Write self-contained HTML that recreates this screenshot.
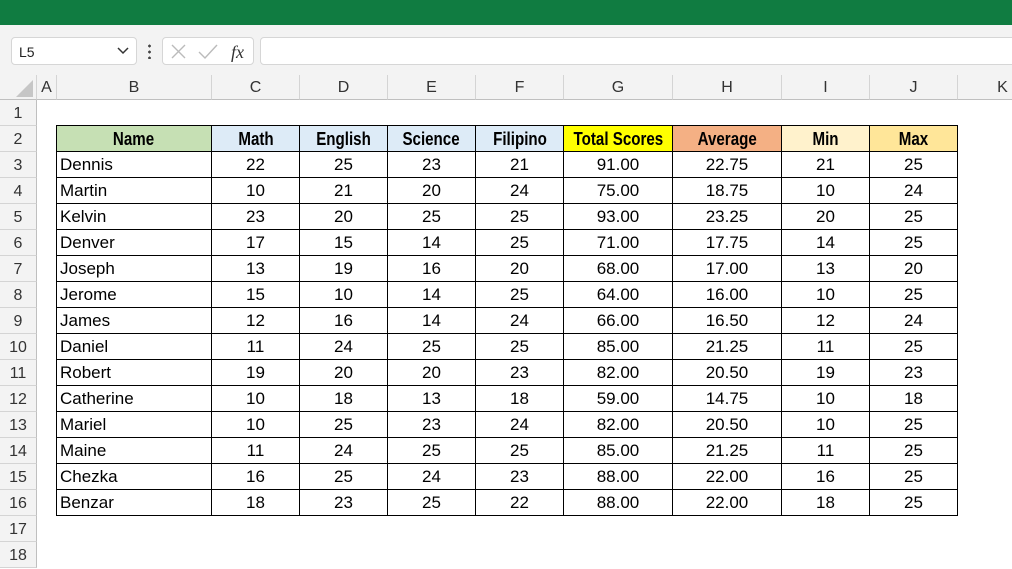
<!DOCTYPE html>
<html><head><meta charset="utf-8"><style>
*{margin:0;padding:0;box-sizing:border-box}
body{width:1012px;height:555px;overflow:hidden;background:#fff;font-family:"Liberation Sans",Arial,sans-serif;position:relative}
.top{position:absolute;left:0;top:0;width:1012px;height:25px;background:#107c41}
.fb{position:absolute;left:0;top:25px;width:1012px;height:50px;background:#f3f3f3}
.nb{position:absolute;left:11px;top:37px;width:126px;height:28px;background:#fff;border:1px solid #d6d6d6;border-radius:4px;font-size:14px;padding:6px 0 0 7px;color:#222}
.fx{position:absolute;left:162px;top:37px;width:92px;height:28px;background:#fff;border:1px solid #d6d6d6;border-radius:4px}
.fin{position:absolute;left:260px;top:37px;width:760px;height:28px;background:#fff;border:1px solid #d6d6d6;border-radius:4px}
.ch{position:absolute;top:75px;height:25px;background:#f3f3f3;border-bottom:1px solid #bfbfbf;border-right:1px solid #d4d4d4;text-align:center;font-size:16px;line-height:26px;color:#333}
.rh{position:absolute;left:0;width:37px;height:26px;background:#f3f3f3;border-bottom:1px solid #d4d4d4;border-right:1px solid #bfbfbf;text-align:center;font-size:16px;line-height:27px;color:#333}
table{position:absolute;left:56px;top:125px;border-collapse:collapse}
td{border:1px solid #000;height:26px;padding:0;font-size:17px;text-align:center;color:#000;line-height:24px;white-space:nowrap}
td.n{text-align:left;padding-left:3px}
tr.h td{font-weight:bold;font-size:18px}
tr.h td span{display:inline-block;transform:scaleX(0.84)}
</style></head><body>
<div class="top"></div>
<div class="fb"></div>
<div class="nb">L5<svg style="position:absolute;left:105px;top:9px" width="12" height="8"><path d="M1 1L6 6L11 1" stroke="#333" stroke-width="1.5" fill="none"/></svg></div>
<div style="position:absolute;left:148px;top:43px;width:3px;height:16px;background:radial-gradient(circle,#444 1.3px,transparent 1.5px) 0 0/3px 6px"></div>
<div class="fx"><svg width="92" height="28"><path d="M9 7L22 20M22 7L9 20" stroke="#bbb" stroke-width="1.4"/><path d="M36 14L42 20L54 7" stroke="#bbb" stroke-width="1.4" fill="none"/><text x="68" y="20" font-family="Liberation Serif" font-style="italic" font-size="18" fill="#333">fx</text></svg></div>
<div class="fin"></div>
<div class="ch" style="left:0;width:37px;"><svg width="37" height="25" style="position:absolute;left:0;top:0"><path d="M33 5L33 22L16 22Z" fill="#c6c6c6"/></svg></div>
<div class="ch" style="left:37px;width:20px">A</div>
<div class="ch" style="left:57px;width:155px">B</div>
<div class="ch" style="left:212px;width:88px">C</div>
<div class="ch" style="left:300px;width:88px">D</div>
<div class="ch" style="left:388px;width:88px">E</div>
<div class="ch" style="left:476px;width:88px">F</div>
<div class="ch" style="left:564px;width:109px">G</div>
<div class="ch" style="left:673px;width:109px">H</div>
<div class="ch" style="left:782px;width:88px">I</div>
<div class="ch" style="left:870px;width:88px">J</div>
<div class="ch" style="left:958px;width:90px">K</div>
<div class="rh" style="top:100px">1</div><div class="rh" style="top:126px">2</div><div class="rh" style="top:152px">3</div><div class="rh" style="top:178px">4</div><div class="rh" style="top:204px">5</div><div class="rh" style="top:230px">6</div><div class="rh" style="top:256px">7</div><div class="rh" style="top:282px">8</div><div class="rh" style="top:308px">9</div><div class="rh" style="top:334px">10</div><div class="rh" style="top:360px">11</div><div class="rh" style="top:386px">12</div><div class="rh" style="top:412px">13</div><div class="rh" style="top:438px">14</div><div class="rh" style="top:464px">15</div><div class="rh" style="top:490px">16</div><div class="rh" style="top:516px">17</div><div class="rh" style="top:542px">18</div>
<table>
<colgroup><col style="width:155px"><col style="width:88px"><col style="width:88px"><col style="width:88px"><col style="width:88px"><col style="width:109px"><col style="width:109px"><col style="width:88px"><col style="width:88px"></colgroup>
<tr class="h"><td style="background:#c6e0b4"><span>Name</span></td><td style="background:#ddebf7"><span>Math</span></td><td style="background:#ddebf7"><span>English</span></td><td style="background:#ddebf7"><span>Science</span></td><td style="background:#ddebf7"><span>Filipino</span></td><td style="background:#ffff00"><span>Total Scores</span></td><td style="background:#f4b084"><span>Average</span></td><td style="background:#fff2cc"><span>Min</span></td><td style="background:#ffe699"><span>Max</span></td></tr>
<tr><td class="n">Dennis</td><td>22</td><td>25</td><td>23</td><td>21</td><td>91.00</td><td>22.75</td><td>21</td><td>25</td></tr>
<tr><td class="n">Martin</td><td>10</td><td>21</td><td>20</td><td>24</td><td>75.00</td><td>18.75</td><td>10</td><td>24</td></tr>
<tr><td class="n">Kelvin</td><td>23</td><td>20</td><td>25</td><td>25</td><td>93.00</td><td>23.25</td><td>20</td><td>25</td></tr>
<tr><td class="n">Denver</td><td>17</td><td>15</td><td>14</td><td>25</td><td>71.00</td><td>17.75</td><td>14</td><td>25</td></tr>
<tr><td class="n">Joseph</td><td>13</td><td>19</td><td>16</td><td>20</td><td>68.00</td><td>17.00</td><td>13</td><td>20</td></tr>
<tr><td class="n">Jerome</td><td>15</td><td>10</td><td>14</td><td>25</td><td>64.00</td><td>16.00</td><td>10</td><td>25</td></tr>
<tr><td class="n">James</td><td>12</td><td>16</td><td>14</td><td>24</td><td>66.00</td><td>16.50</td><td>12</td><td>24</td></tr>
<tr><td class="n">Daniel</td><td>11</td><td>24</td><td>25</td><td>25</td><td>85.00</td><td>21.25</td><td>11</td><td>25</td></tr>
<tr><td class="n">Robert</td><td>19</td><td>20</td><td>20</td><td>23</td><td>82.00</td><td>20.50</td><td>19</td><td>23</td></tr>
<tr><td class="n">Catherine</td><td>10</td><td>18</td><td>13</td><td>18</td><td>59.00</td><td>14.75</td><td>10</td><td>18</td></tr>
<tr><td class="n">Mariel</td><td>10</td><td>25</td><td>23</td><td>24</td><td>82.00</td><td>20.50</td><td>10</td><td>25</td></tr>
<tr><td class="n">Maine</td><td>11</td><td>24</td><td>25</td><td>25</td><td>85.00</td><td>21.25</td><td>11</td><td>25</td></tr>
<tr><td class="n">Chezka</td><td>16</td><td>25</td><td>24</td><td>23</td><td>88.00</td><td>22.00</td><td>16</td><td>25</td></tr>
<tr><td class="n">Benzar</td><td>18</td><td>23</td><td>25</td><td>22</td><td>88.00</td><td>22.00</td><td>18</td><td>25</td></tr>
</table>
</body></html>
